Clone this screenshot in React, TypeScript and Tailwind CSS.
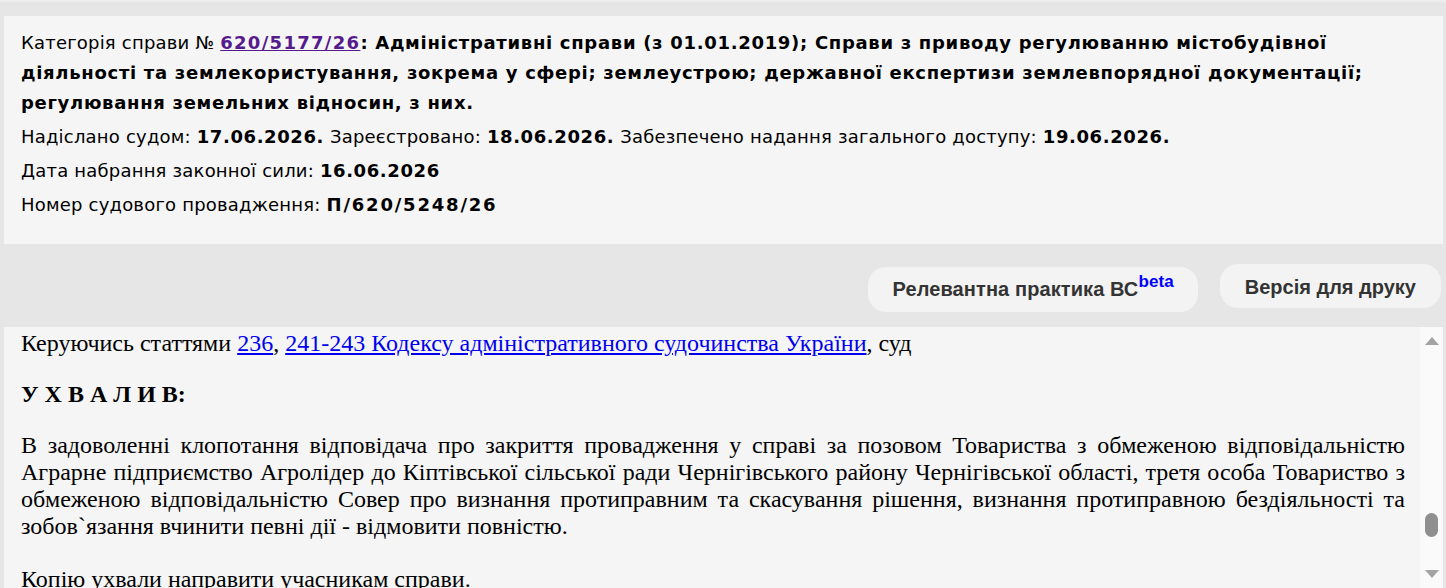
import React from "react";

const sans = { fontFamily: '"DejaVu Sans", Verdana, Tahoma, sans-serif' };
const serif = { fontFamily: '"Liberation Serif", "Times New Roman", serif' };
const arial = { fontFamily: '"Liberation Sans", Arial, sans-serif' };

function CaseHeader() {
  return (
    <div className="mx-[4px] mr-[3px] mt-[14px] bg-[#f5f5f5] pl-[17px] pr-[66px] pt-[12px] pb-[22px] text-[18px] tracking-[0.2px] text-black" style={sans}>
      <div className="leading-[30px]">
        Категорія справи №{" "}
        <a href="#" className="font-bold tracking-[1.3px] text-[#551a8b] underline">
          620/5177/26
        </a>
        <b className="tracking-[0.7px]">
          : Адміністративні справи (з 01.01.2019); Справи з приводу регулюванню містобудівної діяльності та
          землекористування, зокрема у сфері; землеустрою; державної експертизи землевпорядної документації;
          регулювання земельних відносин, з них.
        </b>
      </div>
      <div className="mt-[2px] leading-[34px]">
        Надіслано судом: <b className="tracking-[0.6px]">17.06.2026.</b> Зареєстровано:{" "}
        <b className="tracking-[0.6px]">18.06.2026.</b> Забезпечено надання загального доступу:{" "}
        <b className="tracking-[0.6px]">19.06.2026.</b>
      </div>
      <div className="leading-[34px]">
        Дата набрання законної сили: <b className="tracking-[0.6px]">16.06.2026</b>
      </div>
      <div className="leading-[34px]">
        Номер судового провадження: <b className="tracking-[1.8px]">П/620/5248/26</b>
      </div>
    </div>
  );
}

function Toolbar() {
  return (
    <div className="flex h-[83px] items-start justify-end gap-[22px] pr-[5px] pt-[20px]" style={arial}>
      <button className="mt-[3px] h-[45px] rounded-[18px] bg-[#f3f3f3] pl-[25px] pr-[24px] text-[20px] leading-[45px] font-bold tracking-[0.1px] text-[#333]">
        Релевантна практика ВС
        <sup className="-top-[9px] text-[17px] font-bold text-[#0000ff]">beta</sup>
      </button>
      <button className="h-[44px] rounded-[18px] bg-[#f3f3f3] px-[25px] text-[20px] leading-[46px] font-bold text-[#333]">
        Версія для друку
      </button>
    </div>
  );
}

function ScrollBar() {
  return (
    <div className="flex w-[23px] shrink-0 flex-col items-center bg-[#fafafa]">
      <svg width="14" height="8" viewBox="0 0 14 8" className="mt-[10px]">
        <path d="M7 0 L14 8 L0 8 Z" fill="#a3a3a3" />
      </svg>
      <div className="mt-[168px] h-[24px] w-[13px] rounded-full bg-[#8f8f8f]" />
      <svg width="14" height="8" viewBox="0 0 14 8" className="mt-[33px]">
        <path d="M0 0 L14 0 L7 8 Z" fill="#a3a3a3" />
      </svg>
    </div>
  );
}

function Decision() {
  const link = "text-[#0000ee] underline";
  return (
    <div className="mx-[4px] mr-[3px] flex h-[261px] overflow-hidden bg-[#f5f5f5]">
      <div className="min-w-0 flex-1 pl-[17px] pr-[15px] pt-[3px] text-[24px] leading-[27px] text-black" style={serif}>
        <p>
          Керуючись статтями{" "}
          <a href="#" className={link}>
            236
          </a>
          ,{" "}
          <a href="#" className={link}>
            241-243 Кодексу адміністративного судочинства України
          </a>
          , суд
        </p>
        <p className="mt-[24px] font-bold">У Х В А Л И В:</p>
        <p className="mt-[24px] text-justify">
          В задоволенні клопотання відповідача про закриття провадження у справі за позовом Товариства з обмеженою
          відповідальністю Аграрне підприємство Агролідер до Кіптівської сільської ради Чернігівського району
          Чернігівської області, третя особа Товариство з обмеженою відповідальністю Совер про визнання протиправним та
          скасування рішення, визнання протиправною бездіяльності та зобов`язання вчинити певні дії - відмовити
          повністю.
        </p>
        <p className="mt-[26px]">Копію ухвали направити учасникам справи.</p>
      </div>
      <ScrollBar />
    </div>
  );
}

export default function App() {
  return (
    <div className="h-[588px] w-[1446px] overflow-hidden border-t-[2px] border-[#ededed] bg-[#e6e6e6]">
      <CaseHeader />
      <Toolbar />
      <Decision />
    </div>
  );
}
